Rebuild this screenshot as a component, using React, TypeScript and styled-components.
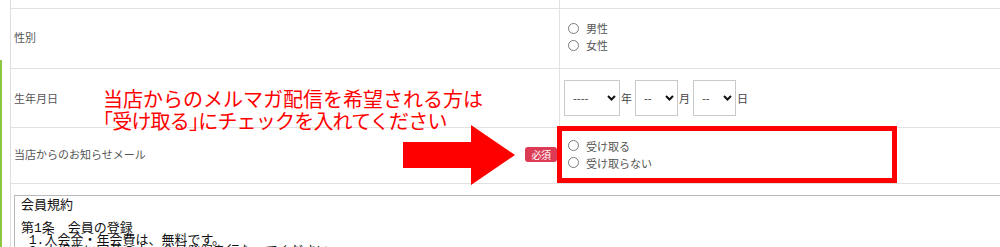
import React from "react";
import styled, { createGlobalStyle } from "styled-components";

const GlobalStyle = createGlobalStyle`
  * { box-sizing: border-box; }
  html, body { margin: 0; padding: 0; background: #fff; overflow: hidden; }
  body { font-family: "Noto Sans CJK JP", "Noto Sans", sans-serif; }
`;

const Page = styled.div`
  position: relative;
  display: flex;
  width: 1000px;
  height: 247px;
  overflow: hidden;
`;

const Gutter = styled.div`
  width: 10px;
  flex: none;
  display: flex;
`;

const GreenBar = styled.div`
  width: 2px;
  margin-top: 60px;
  background: #8dc63f;
`;

const Table = styled.div`
  flex: none;
  width: 1000px;
  border-left: 1px solid #dedede;
  display: flex;
  flex-direction: column;
`;

const LabelCell = styled.div`
  display: flex;
  align-items: center;
  padding: 0 0 0 3px;
  border-right: 1px solid #e2e2e2;
  font-size: 11px;
  color: #555;
`;

const ValueCell = styled.div`
  display: flex;
  flex-direction: column;
  justify-content: center;
  padding: 0 4px;
  font-size: 11px;
  color: #555;
`;

const Row = styled.div<{ $h: number; $pb?: number }>`
  flex: none;
  display: grid;
  grid-template-columns: 549px 1fr;
  height: ${(p) => p.$h + 1}px;
  border-bottom: 1px solid #e2e2e2;
  & > ${LabelCell}, & > ${ValueCell} {
    padding-bottom: ${(p) => p.$pb ?? 0}px;
  }
`;

const Badge = styled.span`
  margin-left: auto;
  margin-right: 2px;
  width: 32px;
  height: 15px;
  border-radius: 3px;
  background: #dc3a55;
  color: #fff;
  font-size: 10px;
  line-height: 15px;
  text-align: center;
  letter-spacing: -0.5px;
`;

const RadioItem = styled.label`
  display: flex;
  align-items: center;
  gap: 7px;
  height: 17px;
  padding-left: 4px;
`;

const RadioCircle = styled.span`
  width: 11px;
  height: 11px;
  border-radius: 50%;
  border: 1px solid #7a7a7a;
  background: #fff;
`;

const DateLine = styled.div`
  display: flex;
  align-items: center;
`;

const SelectBox = styled.div<{ $w: number }>`
  width: ${(p) => p.$w}px;
  height: 36px;
  border: 1px solid #c9c9c9;
  background: #fff;
  display: flex;
  align-items: center;
  justify-content: space-between;
  padding: 0 3px 0 8px;
  font-size: 11px;
  color: #333;
`;

const Unit = styled.span<{ $gap: number }>`
  font-size: 11px;
  color: #444;
  margin: 0 ${(p) => p.$gap}px 0 1px;
`;

const TermsRow = styled.div`
  padding: 11px 0 0 3px;
  flex: none;
`;

const TermsBox = styled.div`
  border: 1px solid #b8b8b8;
  height: 100px;
  padding: 4px 6px;
  font-family: "Liberation Mono", "Noto Sans CJK JP", monospace;
  font-size: 13px;
  line-height: 11.5px;
  color: #111;
  white-space: pre;
`;

const Note = styled.div`
  position: absolute;
  left: 103px;
  top: 88px;
  font-size: 20px;
  line-height: 21.5px;
  color: #ff0000;
  white-space: nowrap;
`;

const NoteLine = styled.div<{ $ls?: number }>`
  letter-spacing: ${(p) => p.$ls ?? 0}px;
`;

const Bracket = styled.span`
  font-feature-settings: "halt";
`;

const Highlight = styled.div`
  position: absolute;
  left: 557px;
  top: 126px;
  width: 340px;
  height: 57px;
  border: 5px solid #ff0000;
`;

const Arrow = styled.svg`
  position: absolute;
  left: 403px;
  top: 125px;
`;

const Chevron = () => (
  <svg width="9" height="6" viewBox="0 0 9 6">
    <path d="M1 1 L4.5 4.5 L8 1" stroke="#111" strokeWidth="2" fill="none" />
  </svg>
);

const Radio = ({ label }: { label: string }) => (
  <RadioItem>
    <RadioCircle />
    <span>{label}</span>
  </RadioItem>
);

export default function App() {
  return (
    <>
      <GlobalStyle />
      <Page>
        <Gutter>
          <GreenBar />
        </Gutter>
        <Table>
          <Row $h={8}>
            <LabelCell />
            <ValueCell />
          </Row>
          <Row $h={59} $pb={4}>
            <LabelCell>性別</LabelCell>
            <ValueCell>
              <Radio label="男性" />
              <Radio label="女性" />
            </ValueCell>
          </Row>
          <Row $h={58}>
            <LabelCell>生年月日</LabelCell>
            <ValueCell>
              <DateLine>
                <SelectBox $w={56}>
                  <span>----</span>
                  <Chevron />
                </SelectBox>
                <Unit $gap={3}>年</Unit>
                <SelectBox $w={43}>
                  <span>--</span>
                  <Chevron />
                </SelectBox>
                <Unit $gap={3}>月</Unit>
                <SelectBox $w={43}>
                  <span>--</span>
                  <Chevron />
                </SelectBox>
                <Unit $gap={0}>日</Unit>
              </DateLine>
            </ValueCell>
          </Row>
          <Row $h={55} $pb={3}>
            <LabelCell>
              当店からのお知らせメール
              <Badge>必須</Badge>
            </LabelCell>
            <ValueCell>
              <Radio label="受け取る" />
              <Radio label="受け取らない" />
            </ValueCell>
          </Row>
          <TermsRow>
            <TermsBox>
              {"会員規約\n\n第1条　会員の登録\n 1.入会金・年会費は、無料です。\n 2.本規約に同意の上、会員登録を行なってください。"}
            </TermsBox>
          </TermsRow>
        </Table>
        <Note>
          <NoteLine>当店からのメルマガ配信を希望される方は</NoteLine>
          <NoteLine $ls={-0.8}>
            <Bracket>「</Bracket>受け取る<Bracket>」</Bracket>にチェックを入れてください
          </NoteLine>
        </Note>
        <Highlight />
        <Arrow width="112" height="60" viewBox="0 0 112 60">
          <polygon points="0,17 68,17 68,0 112,30 68,60 68,43 0,43" fill="#ff0000" />
        </Arrow>
      </Page>
    </>
  );
}
